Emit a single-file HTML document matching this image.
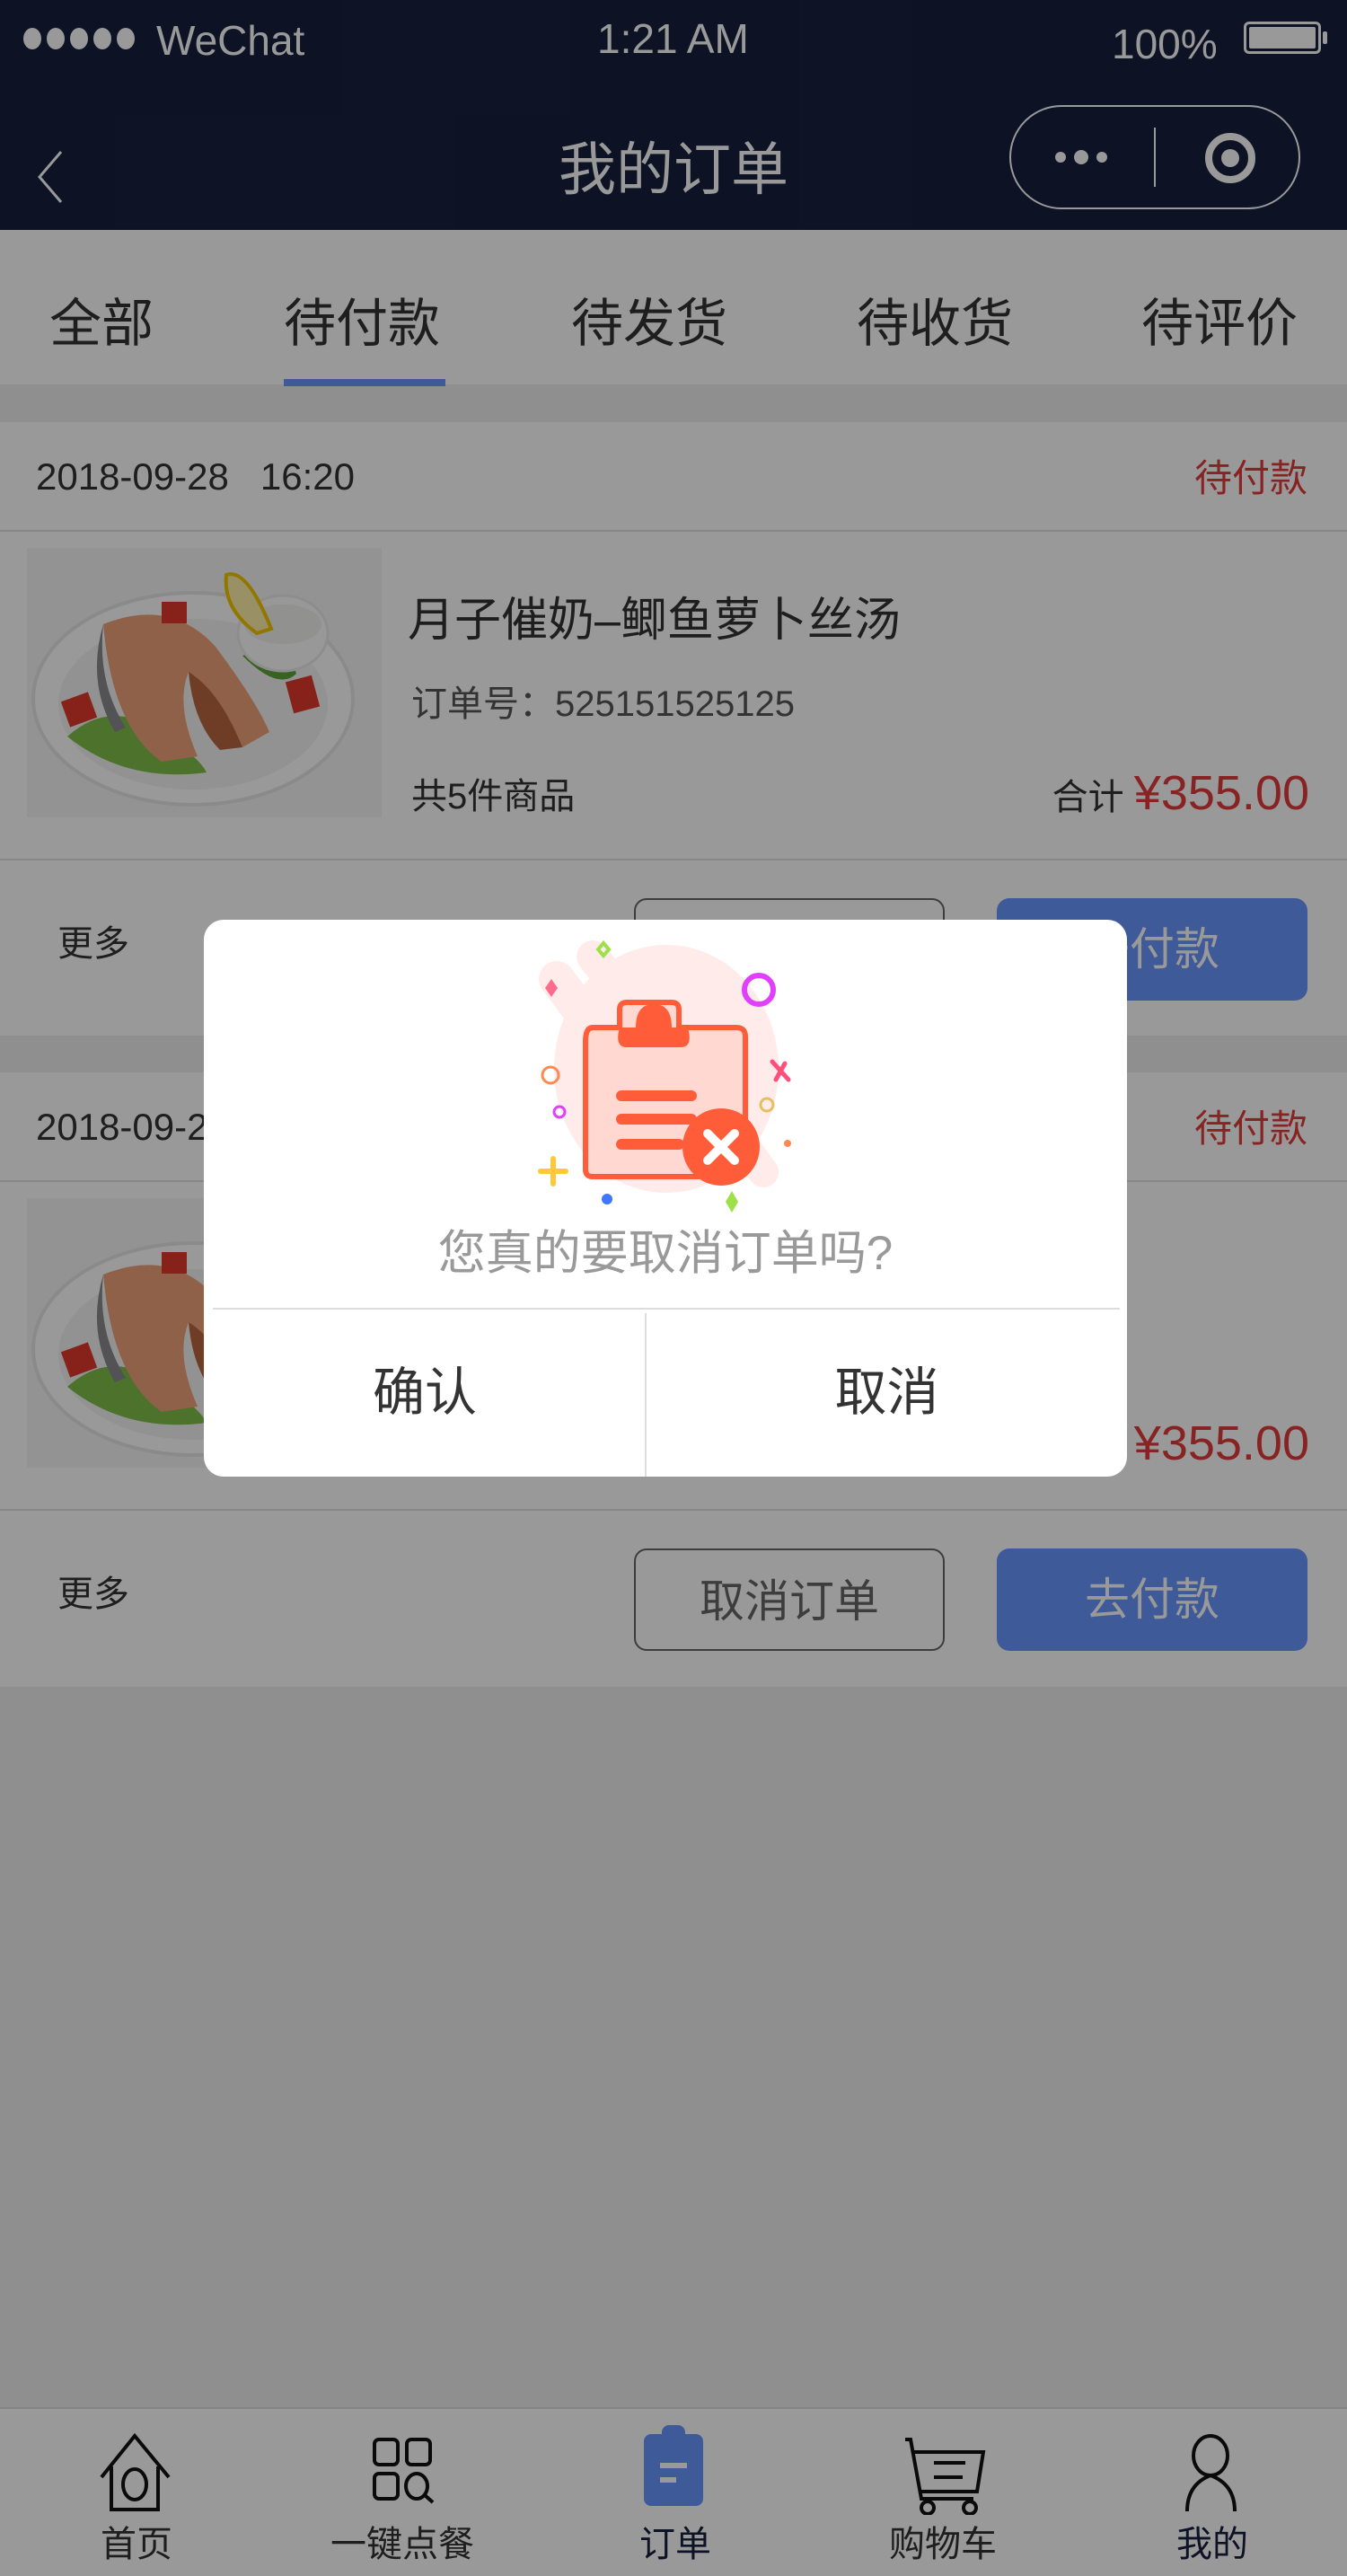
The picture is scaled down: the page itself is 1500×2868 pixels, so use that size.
<!DOCTYPE html>
<html><head><meta charset="utf-8"><style>
*{margin:0;padding:0;box-sizing:border-box}
body{width:1500px;height:2868px;position:relative;overflow:hidden;background:#efefef;font-family:"Liberation Sans","Noto Sans CJK SC",sans-serif}
.a{position:absolute;white-space:nowrap}
.card{position:absolute;left:0;width:1500px;background:#fff}
.line{position:absolute;left:0;width:1500px;height:2px;background:#e2e2e2}
.btn{position:absolute;width:346px;height:114px;border-radius:14px;font-size:50px;line-height:114px;text-align:center}
</style></head><body>
<!-- header -->
<div class="a" style="left:0;top:0;width:1500px;height:256px;background:#17203d"></div>
<svg class="a" style="left:24px;top:26px" width="140" height="34"><g fill="#fff"><ellipse cx="12" cy="17" rx="10" ry="12"/><ellipse cx="38" cy="17" rx="10" ry="12"/><ellipse cx="64" cy="17" rx="10" ry="12"/><ellipse cx="90" cy="17" rx="10" ry="12"/><ellipse cx="116" cy="17" rx="10" ry="12"/></g></svg>
<div class="a" style="left:174px;top:18px;font-size:46px;color:#fff;line-height:54px">WeChat</div>
<div class="a" style="left:665px;top:16px;font-size:46px;color:#fff;line-height:54px">1:21 AM</div>
<div class="a" style="left:1238px;top:22px;font-size:46px;color:#fff;line-height:54px">100%</div>
<div class="a" style="left:1385px;top:24px;width:86px;height:36px;border:3px solid #fff;border-radius:6px;padding:3px"><div style="width:100%;height:100%;background:#fff;border-radius:2px"></div></div>
<div class="a" style="left:1473px;top:35px;width:5px;height:14px;background:#fff;border-radius:2px"></div>
<svg class="a" style="left:36px;top:165px" width="40" height="64"><path d="M32 4 L8 32 L32 60" stroke="#fff" stroke-width="3" fill="none"/></svg>
<div class="a" style="left:0;width:1500px;top:148px;text-align:center;font-size:64px;color:#fff;line-height:82px">我的订单</div>
<div class="a" style="left:1124px;top:117px;width:324px;height:116px;border:2px solid #fff;border-radius:58px"></div>
<div class="a" style="left:1285px;top:142px;width:2px;height:66px;background:#fff"></div>
<svg class="a" style="left:1170px;top:160px" width="70" height="30"><circle cx="11" cy="15" r="6" fill="#fff"/><circle cx="34" cy="15" r="8" fill="#fff"/><circle cx="57" cy="15" r="6" fill="#fff"/></svg>
<svg class="a" style="left:1340px;top:146px" width="60" height="60"><circle cx="30" cy="30" r="24" stroke="#fff" stroke-width="8" fill="none"/><circle cx="30" cy="30" r="10" fill="#fff"/></svg>
<!-- tabs -->
<div class="a" style="left:0;top:256px;width:1500px;height:172px;background:#fff"></div>
<div class="a" style="top:326px;left:55px;font-size:58px;color:#333;line-height:70px">全部</div>
<div class="a" style="top:326px;left:316px;font-size:58px;color:#333;line-height:70px">待付款</div>
<div class="a" style="top:326px;left:636px;font-size:58px;color:#333;line-height:70px">待发货</div>
<div class="a" style="top:326px;left:954px;font-size:58px;color:#333;line-height:70px">待收货</div>
<div class="a" style="top:326px;left:1271px;font-size:58px;color:#333;line-height:70px">待评价</div>
<div class="a" style="left:316px;top:422px;width:180px;height:8px;background:#6a96ff"></div>

<svg width="0" height="0" style="position:absolute"><defs>
<g id="food">
<rect x="0" y="0" width="395" height="300" fill="#f6f6f6"/>
<ellipse cx="185" cy="168" rx="178" ry="118" fill="#fff" stroke="#e6e6e6" stroke-width="4"/>
<ellipse cx="185" cy="174" rx="150" ry="95" fill="#f3f3f3"/>
<path d="M45 210 Q90 170 140 200 Q190 230 200 250 Q110 262 45 210Z" fill="#7fbf4a"/>
<path d="M85 85 Q160 55 210 110 Q255 170 270 205 L240 222 Q210 160 180 138 Q165 175 190 232 L150 238 Q95 200 85 85Z" fill="#f0a27a"/>
<path d="M180 138 Q215 160 240 222 L215 225 Q185 195 180 138Z" fill="#b9663e"/>
<path d="M85 85 Q78 150 110 200 L98 205 Q66 150 85 85Z" fill="#8a8a90"/>
<rect x="42" y="165" width="32" height="30" fill="#e03a2a" transform="rotate(-20 58 180)"/>
<rect x="150" y="60" width="28" height="24" fill="#e03a2a"/>
<rect x="292" y="145" width="30" height="36" fill="#e03a2a" transform="rotate(-15 307 163)"/>
<path d="M240 120 Q280 160 300 140 Q290 105 240 120Z" fill="#5da43a"/>
<ellipse cx="285" cy="95" rx="50" ry="42" fill="#fdfdfd" stroke="#ececec" stroke-width="3"/>
<ellipse cx="285" cy="85" rx="43" ry="22" fill="#f2f4ee"/>
<path d="M222 30 Q245 22 272 90 L256 95 Q218 68 222 30Z" fill="#fff2a8" stroke="#f2c500" stroke-width="4"/>
</g></defs></svg>

<!-- card 1 -->
<div class="card" style="top:470px;height:683px"></div>
<div class="a" style="left:40px;top:506px;font-size:42px;color:#333;line-height:50px">2018-09-28&nbsp;&nbsp;&nbsp;16:20</div>
<div class="a" style="right:44px;top:508px;font-size:42px;color:#e33b3b;line-height:50px">待付款</div>
<div class="line" style="top:590px"></div>
<svg class="a" style="left:30px;top:610px" width="395" height="300"><use href="#food"/></svg>
<div class="a" style="left:454px;top:658px;font-size:52px;color:#333;line-height:66px">月子催奶–鲫鱼萝卜丝汤</div>
<div class="a" style="left:458px;top:760px;font-size:40px;color:#555;line-height:48px">订单号：525151525125</div>
<div class="a" style="left:458px;top:862px;font-size:40px;color:#333;line-height:50px">共5件商品</div>
<div class="a" style="right:42px;top:852px;color:#333;line-height:62px"><span style="font-size:40px">合计 </span><span style="font-size:54px;color:#e33b3b">¥355.00</span></div>
<div class="line" style="top:956px"></div>
<div class="a" style="left:64px;top:1026px;font-size:40px;color:#333;line-height:50px">更多</div>
<div class="btn a" style="left:706px;top:1000px;border:2px solid #666;color:#666">取消订单</div>
<div class="btn a" style="left:1110px;top:1000px;background:#6a96ff;color:#fff">去付款</div>

<!-- card 2 -->
<div class="card" style="top:1194px;height:684px"></div>
<div class="a" style="left:40px;top:1230px;font-size:42px;color:#333;line-height:50px">2018-09-28&nbsp;&nbsp;&nbsp;16:20</div>
<div class="a" style="right:44px;top:1232px;font-size:42px;color:#e33b3b;line-height:50px">待付款</div>
<div class="line" style="top:1314px"></div>
<svg class="a" style="left:30px;top:1334px" width="395" height="300"><use href="#food"/></svg>
<div class="a" style="left:454px;top:1382px;font-size:52px;color:#333;line-height:66px">月子催奶–鲫鱼萝卜丝汤</div>
<div class="a" style="left:458px;top:1484px;font-size:40px;color:#555;line-height:48px">订单号：525151525125</div>
<div class="a" style="left:458px;top:1586px;font-size:40px;color:#333;line-height:50px">共5件商品</div>
<div class="a" style="right:42px;top:1576px;color:#333;line-height:62px"><span style="font-size:40px">合计 </span><span style="font-size:54px;color:#e33b3b">¥355.00</span></div>
<div class="line" style="top:1680px"></div>
<div class="a" style="left:64px;top:1750px;font-size:40px;color:#333;line-height:50px">更多</div>
<div class="btn a" style="left:706px;top:1724px;border:2px solid #666;color:#666">取消订单</div>
<div class="btn a" style="left:1110px;top:1724px;background:#6a96ff;color:#fff">去付款</div>

<!-- bottom nav -->
<div class="a" style="left:0;top:2680px;width:1500px;height:188px;background:#fff;border-top:2px solid #ddd"></div>
<svg class="a" style="left:0;top:2700px" width="1500" height="100" fill="none" stroke="#111" stroke-width="4">
<path d="M113 58 L150 12 L188 58 M124 46 L124 94 L176 94 L176 46"/><ellipse cx="150" cy="66" rx="13" ry="17"/>
<rect x="417" y="16" width="26" height="28" rx="5"/><rect x="453" y="16" width="26" height="28" rx="5"/><rect x="417" y="54" width="26" height="28" rx="5"/><ellipse cx="464" cy="68" rx="12" ry="14"/><path d="M473 78 L482 86"/>
<path d="M1008 16 L1014 16 L1026 82 L1084 82 M1018 30 L1095 30 L1088 74 L1026 74 M1040 42 L1075 42 M1040 58 L1072 58"/><circle cx="1033" cy="92" r="7"/><circle cx="1080" cy="92" r="7"/>
<ellipse cx="1348" cy="34" rx="19" ry="22"/><path d="M1322 96 Q1322 66 1348 56 Q1375 66 1375 96"/>
</svg>
<svg class="a" style="left:715px;top:2698px" width="70" height="94"><rect x="2" y="12" width="66" height="80" rx="8" fill="#6a96ff"/><rect x="22" y="2" width="26" height="20" rx="8" fill="#6a96ff"/><rect x="20" y="44" width="30" height="6" fill="#fff"/><rect x="20" y="60" width="18" height="6" fill="#fff"/></svg>
<div class="a" style="left:112px;top:2808px;font-size:40px;color:#333;line-height:50px">首页</div>
<div class="a" style="left:368px;top:2808px;font-size:40px;color:#333;line-height:50px">一键点餐</div>
<div class="a" style="left:712px;top:2808px;font-size:40px;color:#17203d;line-height:50px">订单</div>
<div class="a" style="left:990px;top:2808px;font-size:40px;color:#333;line-height:50px">购物车</div>
<div class="a" style="left:1310px;top:2808px;font-size:40px;color:#17203d;line-height:50px">我的</div>

<!-- overlay -->
<div class="a" style="left:0;top:0;width:1500px;height:2868px;background:rgba(0,0,0,0.4)"></div>

<!-- modal -->
<div class="a" style="left:227px;top:1024px;width:1028px;height:620px;background:#fff;border-radius:22px"></div>
<svg class="a" style="left:560px;top:1040px" width="360" height="320">
<ellipse cx="182" cy="150" rx="125" ry="138" fill="#ffecea"/>
<path d="M60 50 L120 130" stroke="#ffecea" stroke-width="40" stroke-linecap="round"/>
<path d="M100 25 L160 100" stroke="#ffecea" stroke-width="36" stroke-linecap="round"/>
<path d="M250 210 L290 265" stroke="#ffecea" stroke-width="34" stroke-linecap="round"/>
<path d="M92 120 Q92 104 100 104 L130 104 L130 84 Q130 76 138 76 L188 76 Q196 76 196 84 L196 104 L260 104 Q270 104 270 114 L270 262 Q270 270 262 270 L100 270 Q92 270 92 262Z" fill="#ffd8d2" stroke="#ff5c3a" stroke-width="6"/>
<path d="M148 104 Q148 78 168 78 Q188 78 188 104 L206 104 Q212 126 198 126 L138 126 Q124 126 130 104Z" fill="#ff5c3a"/>
<path d="M132 180 L210 180 M132 206 L210 206 M132 234 L196 234" stroke="#ff5c3a" stroke-width="12" stroke-linecap="round"/>
<circle cx="243" cy="237" r="43" fill="#ff5c3a"/>
<path d="M228 222 L258 252 M258 222 L228 252" stroke="#fff" stroke-width="10" stroke-linecap="round"/>
<circle cx="285" cy="62" r="16" fill="none" stroke="#e040fb" stroke-width="6"/>
<circle cx="53" cy="157" r="9" fill="none" stroke="#ff8a50" stroke-width="3"/>
<circle cx="63" cy="198" r="6" fill="none" stroke="#e040fb" stroke-width="3"/>
<circle cx="294" cy="190" r="7" fill="none" stroke="#e6c060" stroke-width="3"/>
<circle cx="116" cy="295" r="6" fill="#3f78ff"/>
<circle cx="317" cy="233" r="4" fill="#ff8a50"/>
<path d="M56 250 L56 278 M42 264 L70 264" stroke="#ffc83a" stroke-width="6" stroke-linecap="round"/>
<path d="M300 142 L318 162 M314 144 L304 162" stroke="#ff4f7a" stroke-width="5" stroke-linecap="round"/>
<path d="M106 17 L112 10 L118 17 L112 24Z" fill="none" stroke="#9ee04a" stroke-width="4"/>
<path d="M47 60 L54 50 L61 60 L54 70Z" fill="#ff6b8a"/>
<path d="M248 298 L255 286 L262 298 L255 310Z" fill="#9ee04a"/>
</svg>
<div class="a" style="left:227px;width:1028px;top:1364px;text-align:center;font-size:53px;color:#999;line-height:64px">您真的要取消订单吗?</div>
<div class="a" style="left:237px;top:1456px;width:1010px;height:2px;background:#ddd"></div>
<div class="a" style="left:718px;top:1462px;width:2px;height:182px;background:#ddd"></div>
<div class="a" style="left:227px;width:492px;top:1518px;text-align:center;font-size:58px;color:#333;line-height:66px">确认</div>
<div class="a" style="left:720px;width:535px;top:1518px;text-align:center;font-size:58px;color:#333;line-height:66px">取消</div>
</body></html>
